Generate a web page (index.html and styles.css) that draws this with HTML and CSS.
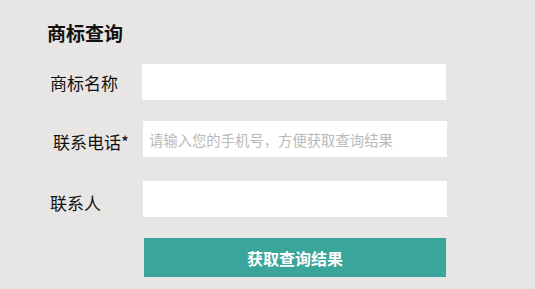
FILE: index.html
```html
<!DOCTYPE html>
<html lang="zh-CN">
<head>
<meta charset="utf-8">
<title>商标查询</title>
<link rel="stylesheet" href="styles.css">
</head>
<body>
<div class="page">
  <h2 class="title">商标查询</h2>
  <form class="form">
    <div class="row row-name">
      <label class="label">商标名称</label>
      <input class="field" type="text">
    </div>
    <div class="row row-phone">
      <label class="label">联系电话*</label>
      <input class="field" type="text" placeholder="请输入您的手机号，方便获取查询结果">
    </div>
    <div class="row row-contact">
      <label class="label">联系人</label>
      <input class="field" type="text">
    </div>
    <div class="row row-submit">
      <button class="submit" type="button">获取查询结果</button>
    </div>
  </form>
</div>
</body>
</html>
```

FILE: styles.css
```css
html, body {
  margin: 0;
  padding: 0;
  background: #e7e6e4;
}
body {
  font-family: "Noto Sans CJK SC", "Noto Sans", sans-serif;
  color: #111;
  width: 535px;
  height: 289px;
  overflow: hidden;
}
.page {
  padding-top: 22px;
}
.title {
  margin: 0 0 0 47px;
  font-size: 19px;
  line-height: 22px;
  font-weight: bold;
  color: #111;
}
.form {
  display: flex;
  flex-direction: column;
  margin-top: 20px;
}
.row {
  display: flex;
  align-items: center;
  height: 36px;
}
.label {
  box-sizing: border-box;
  width: 142px;
  padding-left: 50px;
  font-size: 17px;
  line-height: 20px;
  color: #111;
}
.field {
  box-sizing: border-box;
  width: 304px;
  height: 36px;
  border: none;
  outline: none;
  background: #fff;
  padding: 0 0 0 6px;
  margin: 0;
  font-family: "Noto Sans CJK SC", "Noto Sans", sans-serif;
  font-size: 14.35px;
  color: #333;
}
.field::placeholder {
  color: #b9b9b9;
}
.row-phone {
  margin-top: 21px;
}
.row-phone .label {
  padding-left: 53px;
  padding-top: 5px;
}
.row-phone .field,
.row-contact .field {
  margin-left: 1px;
  width: 304px;
}
.row-contact {
  margin-top: 24px;
}
.row-contact .label {
  padding-top: 8px;
}
.row-name .label {
  padding-top: 1px;
}
.row-submit {
  margin-top: 21px;
  height: 39px;
  padding-left: 144px;
}
.submit {
  width: 302px;
  height: 39px;
  border: none;
  margin: 0;
  padding: 0;
  background: #3aa59b;
  color: #fff;
  font-family: "Noto Sans CJK SC", "Noto Sans", sans-serif;
  font-size: 16px;
  font-weight: bold;
  cursor: pointer;
}
```
